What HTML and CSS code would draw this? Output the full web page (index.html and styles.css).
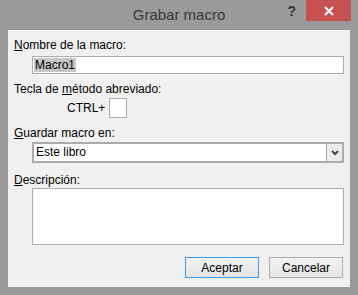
FILE: index.html
```html
<!DOCTYPE html>
<html lang="es">
<head>
  <meta charset="UTF-8">
  <title>Grabar macro</title>
  <link rel="stylesheet" href="styles.css">
</head>
<body>

  <div class="window">
    <div class="titlebar">
      <span class="title">Grabar macro</span>
      <span class="help">?</span>
      <span class="close">
        <svg width="10" height="10" viewBox="0 0 10 10">
          <path d="M1 1 L9 9 M9 1 L1 9" stroke="#fff" stroke-width="2" fill="none"/>
        </svg>
      </span>
    </div>

    <div class="client">
      <label class="label"><u>N</u>ombre de la macro:</label>
      <div class="field input"><span class="selected">Macro1</span></div>

      <label class="label">Tecla de <u>m</u>étodo abreviado:</label>
      <div class="shortcut">
        <span>CTRL+</span>
        <div class="keybox"></div>
      </div>

      <label class="label"><u>G</u>uardar macro en:</label>
      <div class="field combo">
        <span class="combo-text">Este libro</span>
        <span class="combo-btn">
          <svg width="8" height="6" viewBox="0 0 8 6">
            <path d="M1 1 L4 4 L7 1" stroke="#444" stroke-width="2" fill="none"/>
          </svg>
        </span>
      </div>

      <label class="label label-desc"><u>D</u>escripción:</label>
      <div class="field textarea"></div>

      <div class="buttons">
        <button class="button default">Aceptar</button>
        <button class="button">Cancelar</button>
      </div>
    </div>
  </div>

</body>
</html>
```

FILE: styles.css
```css
:root {
  --frame: #9a9a9a;
  --client-bg: #f0f0f0;
  --border: #abadb3;
  --text: #000;
}

* {
  box-sizing: border-box;
}

body {
  margin: 0;
  font-family: 'Liberation Sans', Arial, sans-serif;
  font-size: 12px;
  color: var(--text);
  background-color: var(--frame);
}

.window {
  width: 358px;
  height: 295px;
  display: flex;
  flex-direction: column;
  padding: 0 8px 8px;
  background-color: var(--frame);
}

.titlebar {
  position: relative;
  height: 30px;
  flex-shrink: 0;
}

.title {
  position: absolute;
  left: 0;
  right: 0;
  top: 6px;
  text-align: center;
  font-size: 15px;
  color: #383838;
}

.help {
  position: absolute;
  right: 54px;
  top: 3px;
  font-size: 14px;
  font-weight: bold;
  color: #333;
}

.close {
  position: absolute;
  right: -1px;
  top: 0;
  width: 45px;
  height: 21px;
  background-color: #c75050;
  display: flex;
  align-items: center;
  justify-content: center;
}

.client {
  flex: 1;
  background-color: var(--client-bg);
  padding: 8px 6px 0;
  display: flex;
  flex-direction: column;
}

.label {
  display: block;
  line-height: 15px;
  height: 15px;
}

.field {
  margin-left: 18px;
  background-color: #fff;
  border: 1px solid var(--border);
}

.input {
  height: 18px;
  margin-top: 3px;
  margin-bottom: 8px;
  padding: 1px 1px;
  line-height: 14px;
}

.selected {
  display: inline-block;
  background-color: #c6c6c6;
  padding: 0 1px;
  height: 14px;
}

.shortcut {
  display: flex;
  align-items: center;
  gap: 4px;
  padding-left: 53px;
  margin-top: 1px;
  margin-bottom: 8px;
}

.keybox {
  width: 18px;
  height: 20px;
  background-color: #fff;
  border: 1px solid var(--border);
}

.combo {
  height: 21px;
  margin-top: 1px;
  display: flex;
  align-items: stretch;
  border: 2px solid #ababab;
}

.combo-text {
  flex: 1;
  padding-left: 2px;
  line-height: 17px;
}

.combo-btn {
  width: 16px;
  background-color: #ececec;
  border-left: 1px solid #ababab;
  display: flex;
  align-items: center;
  justify-content: center;
}

.label-desc {
  margin-top: 10px;
}

.textarea {
  height: 57px;
}

.buttons {
  display: flex;
  justify-content: flex-end;
  gap: 10px;
  margin-top: 12px;
  padding-right: 1px;
}

.button {
  width: 74px;
  height: 21px;
  padding: 0;
  font-family: inherit;
  font-size: 12px;
  color: var(--text);
  background: linear-gradient(#f2f2f2, #e4e4e4);
  border: 1px solid #acacac;
}

.button.default {
  border-color: #3c9cf0;
}
```
